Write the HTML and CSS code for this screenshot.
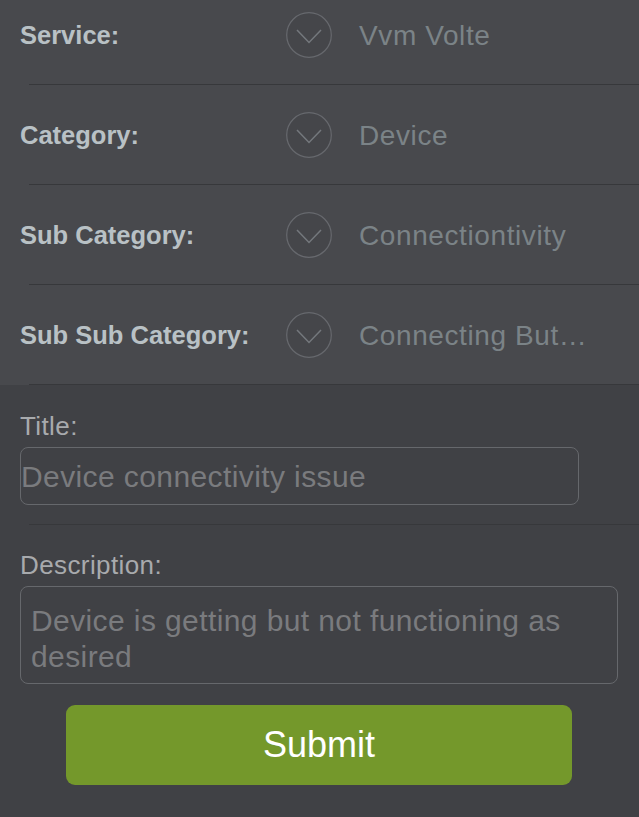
FILE: index.html
```html
<!DOCTYPE html>
<html lang="en">
<head>
<meta charset="utf-8">
<title>Ticket</title>
<link rel="stylesheet" href="styles.css">
</head>
<body>
<div class="pickers">
  <div class="row">
    <span class="label">Service:</span>
    <span class="chev"><svg width="46" height="46" viewBox="0 0 46 46"><circle cx="23" cy="23" r="22.3" class="ring"/><path d="M11 18 L23 30.5 L35 18" class="arrow"/></svg></span>
    <span class="value">Vvm Volte</span>
  </div>
  <div class="row">
    <span class="label">Category:</span>
    <span class="chev"><svg width="46" height="46" viewBox="0 0 46 46"><circle cx="23" cy="23" r="22.3" class="ring"/><path d="M11 18 L23 30.5 L35 18" class="arrow"/></svg></span>
    <span class="value">Device</span>
  </div>
  <div class="row">
    <span class="label">Sub Category:</span>
    <span class="chev"><svg width="46" height="46" viewBox="0 0 46 46"><circle cx="23" cy="23" r="22.3" class="ring"/><path d="M11 18 L23 30.5 L35 18" class="arrow"/></svg></span>
    <span class="value">Connectiontivity</span>
  </div>
  <div class="row">
    <span class="label">Sub Sub Category:</span>
    <span class="chev"><svg width="46" height="46" viewBox="0 0 46 46"><circle cx="23" cy="23" r="22.3" class="ring"/><path d="M11 18 L23 30.5 L35 18" class="arrow"/></svg></span>
    <span class="value">Connecting But…</span>
  </div>
</div>
<div class="form">
  <div class="field-label">Title:</div>
  <div class="input title-input">Device connectivity issue</div>
  <div class="sep"></div>
  <div class="field-label">Description:</div>
  <div class="input desc-input">Device is getting but not functioning as desired</div>
  <button class="submit">Submit</button>
</div>
</body>
</html>
```

FILE: styles.css
```css
html, body {
  margin: 0;
  padding: 0;
}
body {
  background: #404145;
  font-family: "Liberation Sans", Arial, sans-serif;
  overflow: hidden;
}
.pickers {
  background: #48494d;
  margin-top: -15px;
}
.row {
  height: 100px;
  box-sizing: border-box;
  padding: 0 0 1px 20px;
  display: flex;
  align-items: center;
  background: linear-gradient(#37383b, #37383b) no-repeat left 29px bottom / calc(100% - 29px) 1px;
}
.label {
  width: 266px;
  flex: none;
  padding-top: 2px;
  font-size: 25.5px;
  font-weight: 700;
  color: #b9c1c5;
}
.chev {
  width: 46px;
  height: 46px;
  flex: none;
  display: block;
}
.chev svg {
  display: block;
}
.ring {
  fill: #45464a;
  stroke: #67696e;
  stroke-width: 1.2;
}
.arrow {
  fill: none;
  stroke: #74787d;
  stroke-width: 1.5;
}
.value {
  margin-left: 27px;
  padding-top: 2px;
  font-size: 28px;
  letter-spacing: 0.6px;
  color: #7b8387;
  white-space: nowrap;
}
.form {
  padding: 27px 0 0 20px;
}
.field-label {
  font-size: 26px;
  letter-spacing: 0.4px;
  line-height: 28px;
  color: #a8aaad;
}
.input {
  margin-top: 7px;
  border: 1.5px solid #66686c;
  border-radius: 8px;
  box-sizing: border-box;
  color: #7a7b7e;
  font-size: 30px;
  letter-spacing: 0.4px;
}
.title-input {
  width: 559px;
  height: 58px;
  line-height: 56px;
  padding: 1px 0 0 0;
  white-space: nowrap;
}
.sep {
  height: 1px;
  background: #37383b;
  margin: 19px 0 26px 9px;
}
.desc-input {
  width: 598px;
  height: 98px;
  line-height: 36px;
  padding: 16px 10px 0 10px;
}
.submit {
  display: block;
  margin: 21px 0 0 46px;
  width: 506px;
  height: 80px;
  border: none;
  border-radius: 9px;
  background: #74982b;
  color: #ffffff;
  font-family: "Liberation Sans", Arial, sans-serif;
  font-size: 36px;
  padding: 0;
}
```
